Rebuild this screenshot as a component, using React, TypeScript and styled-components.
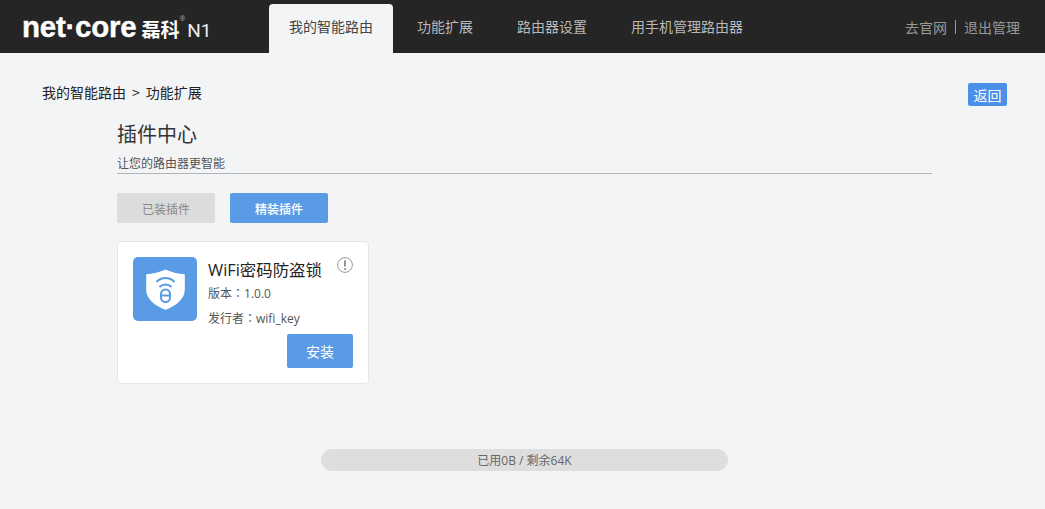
import React from "react";
import styled, { createGlobalStyle } from "styled-components";

const CJK = `"Noto Sans CJK SC", "Liberation Sans", sans-serif`;
const LATIN_CJK = `"Open Sans", "Noto Sans CJK SC", sans-serif`;

const Global = createGlobalStyle`
  html, body { margin: 0; padding: 0; background: #f3f4f6; }
  body { font-family: ${LATIN_CJK}; width: 1045px; height: 509px; overflow: hidden; }
`;

const Page = styled.div`
  display: flex;
  flex-direction: column;
  width: 1045px;
  height: 509px;
`;

const Header = styled.header`
  display: flex;
  align-items: flex-end;
  height: 53px;
  background: #252525;
  padding-left: 22px;
  padding-right: 25px;
  box-sizing: border-box;
`;

const Logo = styled.div`
  display: flex;
  align-items: baseline;
  width: 247px;
  height: 53px;
  line-height: 54px;
  color: #fff;
  white-space: nowrap;
`;

const LogoWord = styled.span`
  font-family: "Liberation Sans", sans-serif;
  font-weight: 700;
  font-size: 29.5px;
  letter-spacing: -0.25px;
  -webkit-text-stroke: 0.4px #fff;
`;

const LogoCn = styled.span`
  font-family: ${CJK};
  font-weight: 700;
  font-size: 19px;
  margin-left: 5px;
`;

const LogoReg = styled.span`
  font-size: 7px;
  color: #aaa;
  align-self: flex-start;
  line-height: 1;
  margin-top: 15px;
`;

const LogoModel = styled.span`
  font-family: Roboto, sans-serif;
  font-size: 19px;
  color: #eee;
  margin-left: 2px;
`;

const Nav = styled.nav`
  display: flex;
  gap: 4px;
  flex: 1;
`;

const Tab = styled.div<{ $active?: boolean }>`
  height: 49px;
  line-height: 45px;
  padding: 0 20px;
  font-size: 14px;
  font-family: ${CJK};
  border-radius: 4px 4px 0 0;
  color: ${(p) => (p.$active ? "#444" : "#b9b9b9")};
  background: ${(p) => (p.$active ? "#f3f4f6" : "transparent")};
`;

const HeaderLinks = styled.div`
  display: flex;
  align-items: center;
  height: 53px;
  font-size: 14px;
  font-family: ${CJK};
  color: #999;
`;

const Divider = styled.span`
  width: 1px;
  height: 14px;
  background: #999;
  margin: 0 8px 0 8px;
`;

const Main = styled.main`
  flex: 1;
  display: flex;
  flex-direction: column;
  padding: 30px 38px 0 42px;
`;

const TopRow = styled.div`
  display: flex;
  justify-content: space-between;
  align-items: center;
  height: 23px;
`;

const Crumb = styled.div`
  display: flex;
  gap: 6px;
  font-size: 14px;
  font-family: ${CJK};
  color: #222;
  margin-top: -6px;
`;

const Back = styled.button`
  width: 39px;
  height: 23px;
  padding: 0;
  border: 0;
  border-radius: 2px;
  background: #4a90e8;
  color: #fff;
  font-size: 14px;
  font-family: ${CJK};
`;

const Content = styled.section`
  display: flex;
  flex-direction: column;
  align-items: flex-start;
  margin-left: 75px;
  width: 815px;
`;

const Title = styled.h1`
  margin: 13px 0 0;
  font-size: 20px;
  line-height: 30px;
  font-weight: 400;
  font-family: ${CJK};
  color: #333;
`;

const Subtitle = styled.div`
  width: 100%;
  box-sizing: border-box;
  margin-top: 6px;
  font-size: 12px;
  line-height: 16px;
  height: 19px;
  font-family: ${CJK};
  color: #555;
  border-bottom: 1px solid #b4b4b4;
`;

const Filters = styled.div`
  display: flex;
  gap: 15px;
  margin-top: 19px;
`;

const Filter = styled.button<{ $active?: boolean }>`
  width: 98px;
  height: 30px;
  padding: 0;
  border: 0;
  border-radius: 2px;
  font-size: 12px;
  font-family: ${CJK};
  background: ${(p) => (p.$active ? "#5a9be6" : "#dcdcdc")};
  color: ${(p) => (p.$active ? "#fff" : "#888")};
  font-weight: ${(p) => (p.$active ? 500 : 400)};
`;

const Card = styled.article`
  position: relative;
  box-sizing: border-box;
  width: 252px;
  height: 143px;
  margin-top: 18px;
  padding: 15px 15px 15px 15px;
  background: #fff;
  border: 1px solid #e6e7e9;
  border-radius: 4px;
  display: flex;
  flex-direction: column;
`;

const CardTop = styled.div`
  display: flex;
  gap: 11px;
`;

const IconTile = styled.div`
  width: 64px;
  height: 64px;
  border-radius: 5px;
  background: #5a9be6;
  display: flex;
  align-items: center;
  justify-content: center;
  flex: none;
`;

const Info = styled.div`
  display: flex;
  flex-direction: column;
  padding-top: 1px;
`;

const Name = styled.div`
  font-size: 16.4px;
  line-height: 23px;
  color: #222;
  font-family: ${LATIN_CJK};
  white-space: nowrap;
`;

const Meta = styled.div`
  font-size: 12px;
  line-height: 23.5px;
  color: #555;
  font-family: ${LATIN_CJK};
  white-space: nowrap;
`;

const Colon = styled.span`
  font-family: "Noto Sans CJK TC", sans-serif;
`;

const Alert = styled.svg`
  position: absolute;
  top: 15px;
  right: 15px;
`;

const Install = styled.button`
  align-self: flex-end;
  flex: none;
  width: 66px;
  height: 34px;
  margin-top: 4px;
  padding: 0;
  border: 0;
  border-radius: 2px;
  background: #5a9be6;
  color: #fff;
  font-size: 14px;
  font-family: ${CJK};
`;

const Usage = styled.div`
  width: 407px;
  height: 22px;
  margin: 65px 0 0 279px;
  border-radius: 11px;
  background: #dedede;
  text-align: center;
  line-height: 24px;
  font-size: 12px;
  font-family: ${LATIN_CJK};
  color: #666;
`;

const ShieldIcon = () => (
  <svg width="39" height="41" viewBox="0 0 39 41" fill="none">
    <path
      d="M19.5 0.5C25 3 32 4.8 38.8 5.2V20.5C38.8 30 30 37 19.5 40.8C9 37 0.2 30 0.2 20.5V5.2C7 4.8 14 3 19.5 0.5Z"
      fill="#fff"
    />
    <path d="M10.5 13C15.5 7.8 23.5 7.8 28.5 13" stroke="#5a9be6" strokeWidth="2" />
    <path d="M13.5 18C17 14.6 22 14.6 25.5 18" stroke="#5a9be6" strokeWidth="2" />
    <rect x="15" y="20.5" width="9" height="12.5" rx="4.5" stroke="#5a9be6" strokeWidth="2" />
    <path d="M15.5 26.5H23.5" stroke="#5a9be6" strokeWidth="2" />
  </svg>
);

export default function App() {
  return (
    <Page>
      <Global />
      <Header>
        <Logo>
          <LogoWord>net·core</LogoWord>
          <LogoCn>磊科</LogoCn>
          <LogoReg>®</LogoReg>
          <LogoModel>N1</LogoModel>
        </Logo>
        <Nav>
          <Tab $active>我的智能路由</Tab>
          <Tab>功能扩展</Tab>
          <Tab>路由器设置</Tab>
          <Tab>用手机管理路由器</Tab>
        </Nav>
        <HeaderLinks>
          <span>去官网</span>
          <Divider />
          <span>退出管理</span>
        </HeaderLinks>
      </Header>
      <Main>
        <TopRow>
          <Crumb>
            <span>我的智能路由</span>
            <span>&gt;</span>
            <span>功能扩展</span>
          </Crumb>
          <Back>返回</Back>
        </TopRow>
        <Content>
          <Title>插件中心</Title>
          <Subtitle>让您的路由器更智能</Subtitle>
          <Filters>
            <Filter>已装插件</Filter>
            <Filter $active>精装插件</Filter>
          </Filters>
          <Card>
            <CardTop>
              <IconTile>
                <ShieldIcon />
              </IconTile>
              <Info>
                <Name>WiFi密码防盗锁</Name>
                <Meta>
                  版本<Colon>：</Colon>1.0.0
                </Meta>
                <Meta>
                  发行者<Colon>：</Colon>wifi_key
                </Meta>
              </Info>
            </CardTop>
            <Alert width="16" height="16" viewBox="0 0 16 16" fill="none">
              <circle cx="8" cy="8" r="7.4" stroke="#999" strokeWidth="1" />
              <path d="M8 3.5V9.5" stroke="#888" strokeWidth="1.8" />
              <circle cx="8" cy="12" r="1.1" fill="#888" />
            </Alert>
            <Install>安装</Install>
          </Card>
        </Content>
        <Usage>已用0B / 剩余64K</Usage>
      </Main>
    </Page>
  );
}
